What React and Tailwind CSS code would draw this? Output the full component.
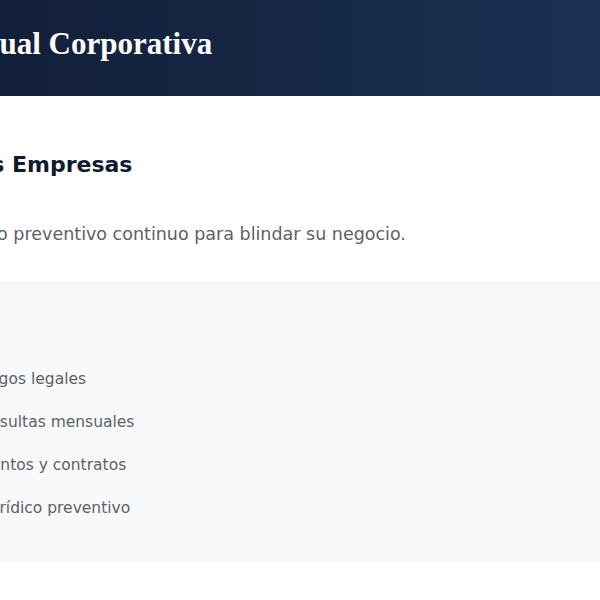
const ITEMS = [
  'Auditoría de los riesgos legales',
  'Atención de sus consultas mensuales',
  'Revisión de documentos y contratos',
  'Acompañamiento jurídico preventivo',
];

export default function App() {
  return (
    <div className="min-h-[600px] w-[600px] overflow-hidden bg-white font-['DejaVu_Sans',sans-serif]">
      {/* Hero */}
      <header className="h-[96px] pb-2 bg-gradient-to-r from-[#121f3a] to-[#1a3152] flex items-center">
        <div className="-ml-[165px] shrink-0">
          <h1 className="text-[31px] font-bold text-white font-['Liberation_Serif',serif] whitespace-nowrap">
            Iguala Mensual Corporativa
          </h1>
        </div>
      </header>

      {/* Intro */}
      <section className="h-[186px] pt-[54px]">
        <div className="-ml-[178px]">
          <h2 className="text-[22px] font-bold text-[#0f1c30] whitespace-nowrap leading-[30px]">
            Para Medianas Empresas
          </h2>
          <p className="-ml-[15px] mt-[42px] text-[17.5px] text-[#5d6166] whitespace-nowrap leading-[24px]">
            Asesoramiento jurídico preventivo continuo para blindar su negocio.
          </p>
        </div>
      </section>

      {/* Coverage */}
      <section className="bg-[#f8f9fb] h-[280px] pt-[86px] shadow-[inset_0_4px_4px_-4px_rgba(0,0,0,0.06)]">
        <ul className="-ml-[188px] flex flex-col gap-[21px]">
          {ITEMS.map((item) => (
            <li key={item} className="flex items-center gap-3 whitespace-nowrap text-[15.5px] text-[#5d6166] leading-[22px]">
              <span className="w-5 h-5 shrink-0" />
              {item}
            </li>
          ))}
        </ul>
      </section>
    </div>
  );
}
